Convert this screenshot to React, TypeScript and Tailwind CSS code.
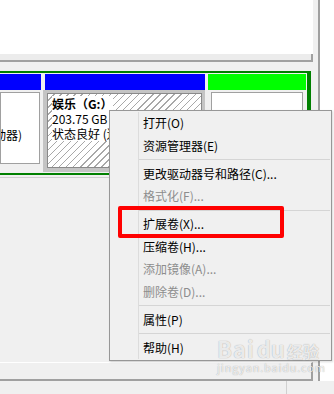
import React from "react";

type MenuItem = { label: string; disabled?: boolean } | "sep";

const menuItems: MenuItem[] = [
  { label: "打开(O)" },
  { label: "资源管理器(E)" },
  "sep",
  { label: "更改驱动器号和路径(C)..." },
  { label: "格式化(F)...", disabled: true },
  "sep",
  { label: "扩展卷(X)..." },
  { label: "压缩卷(H)..." },
  { label: "添加镜像(A)...", disabled: true },
  { label: "删除卷(D)...", disabled: true },
  "sep",
  { label: "属性(P)" },
  "sep",
  { label: "帮助(H)" },
];

function ContextMenu() {
  return (
    <div className="absolute left-[109px] top-[110px] w-[223px] flex border border-[#979797] bg-[#f0f0f0] py-[1px] shadow-[1px_1px_2px_rgba(0,0,0,0.15)]">
      {/* icon gutter */}
      <div className="w-[29px] border-r border-[#dcdcdc]" />
      <div className="flex-1 flex flex-col pr-[1px]">
        {menuItems.map((item, i) =>
          item === "sep" ? (
            <div key={i} className="h-[5.5px] flex items-center">
              <div className="h-[1px] w-full bg-[#d5d5d5]" />
            </div>
          ) : (
            <div
              key={i}
              className={`h-[22.5px] flex items-center pl-[4px] text-[12px] leading-none whitespace-nowrap ${
                item.disabled ? "text-[#8d8d8d]" : "text-black"
              }`}
            >
              {item.label}
            </div>
          )
        )}
      </div>
    </div>
  );
}

function DiskRow() {
  return (
    <div className="h-[104px] mr-[2px] border-t-2 border-r-4 border-b-2 border-[#008000] bg-[#f0f0f0] flex">
      {/* left partition, mostly off screen */}
      <div className="w-[43px] flex flex-col pr-[1px]">
        <div className="h-[16px] bg-[#0000ff] mt-[1px] mr-[1px]" />
        <div className="mt-[2px] mb-[9px] mr-[2px] flex-1 border border-[#a0a0a0] bg-white overflow-hidden">
          <div className="pt-[34px] flex justify-end pr-[17px] text-[12px] leading-[15px] whitespace-nowrap">
            <span>状态良好 (逻辑驱动器)</span>
          </div>
        </div>
      </div>

      {/* selected partition G: */}
      <div className="w-[163px] flex flex-col">
        <div className="h-[16px] bg-[#0000ff] mt-[1px] ml-[2px] mr-[1px]" />
        <div className="flex-1 mb-[1px] mr-[1px] bg-[#c4c4c4] pt-[3px] pl-[4px] pr-[3px] pb-[4px] flex">
          <div className="flex-1 border border-[#8a8a8a] bg-[image:repeating-linear-gradient(135deg,#ffffff_0px,#ffffff_4px,#a8a8a8_4px,#a8a8a8_5px)] pl-[4px] pt-[2px] overflow-hidden">
            <div className="flex flex-col items-start text-[12px] leading-[15px] whitespace-nowrap text-black">
              <span className="bg-white font-bold">娱乐（G:）</span>
              <span className="bg-white">203.75 GB NTFS</span>
              <span className="bg-white">状态良好 (逻辑驱动器)</span>
            </div>
          </div>
        </div>
      </div>

      {/* free / right partition */}
      <div className="flex-1 flex flex-col">
        <div className="h-[16px] bg-[#00ff00] mt-[1px] ml-[2px] mr-[1px]" />
        <div className="mt-[2px] mb-[9px] ml-[5px] mr-[4px] flex-1 border border-[#a0a0a0] bg-white" />
      </div>
    </div>
  );
}

export default function App() {
  return (
    <div className="relative w-[334px] h-[394px] overflow-hidden bg-[#f0f0f0] flex flex-col font-['Noto_Sans_CJK_SC','Liberation_Sans',sans-serif]">
      <div className="h-[381px] flex">
        <div className="w-[313px] flex flex-col">
          {/* volume list view */}
          <div className="h-[54px] bg-white" />
          <div className="h-[8px] border-b-2 border-r-2 border-[#a0a0a0] bg-[#ececec]" />
          <div className="h-[9px]" />
          <DiskRow />
          <div className="h-[2px]" />
          <div className="flex-1 border-t border-[#cfcfcf]" />
          <div className="h-[19px] border-t border-white border-r-2 border-b-2 border-r-[#a0a0a0] border-b-[#a0a0a0]" />
        </div>
        <div className="w-[7px] border-r-2 border-[#a0a0a0] bg-[#f0f0f0]" />
        <div className="flex-1 bg-white" />
      </div>
      {/* status bar */}
      <div className="flex-1 flex">
        <div className="w-[287px] border-r border-[#d0d0d0]" />
      </div>

      <ContextMenu />

      {/* annotation box */}
      <div className="absolute left-[118px] top-[206px] w-[166px] h-[32px] border-4 border-[#ff0000] rounded-[2px]" />

      {/* watermark */}
      <div className="absolute left-[217px] top-[337px] flex flex-col items-start pointer-events-none text-white/80 [text-shadow:0_0_1px_rgba(0,0,0,0.4)]">
        <div className="flex items-end leading-none">
          <span className="text-[22px] font-bold tracking-[1px]">Bai</span>
          <span className="text-[22px] font-bold ml-[2px]">du</span>
          <span className="text-[16px] font-bold ml-[2px]">经验</span>
        </div>
        <span className="text-[11px] leading-none mt-[3px] tracking-[0.8px]">jingyan.baidu.com</span>
      </div>
    </div>
  );
}
